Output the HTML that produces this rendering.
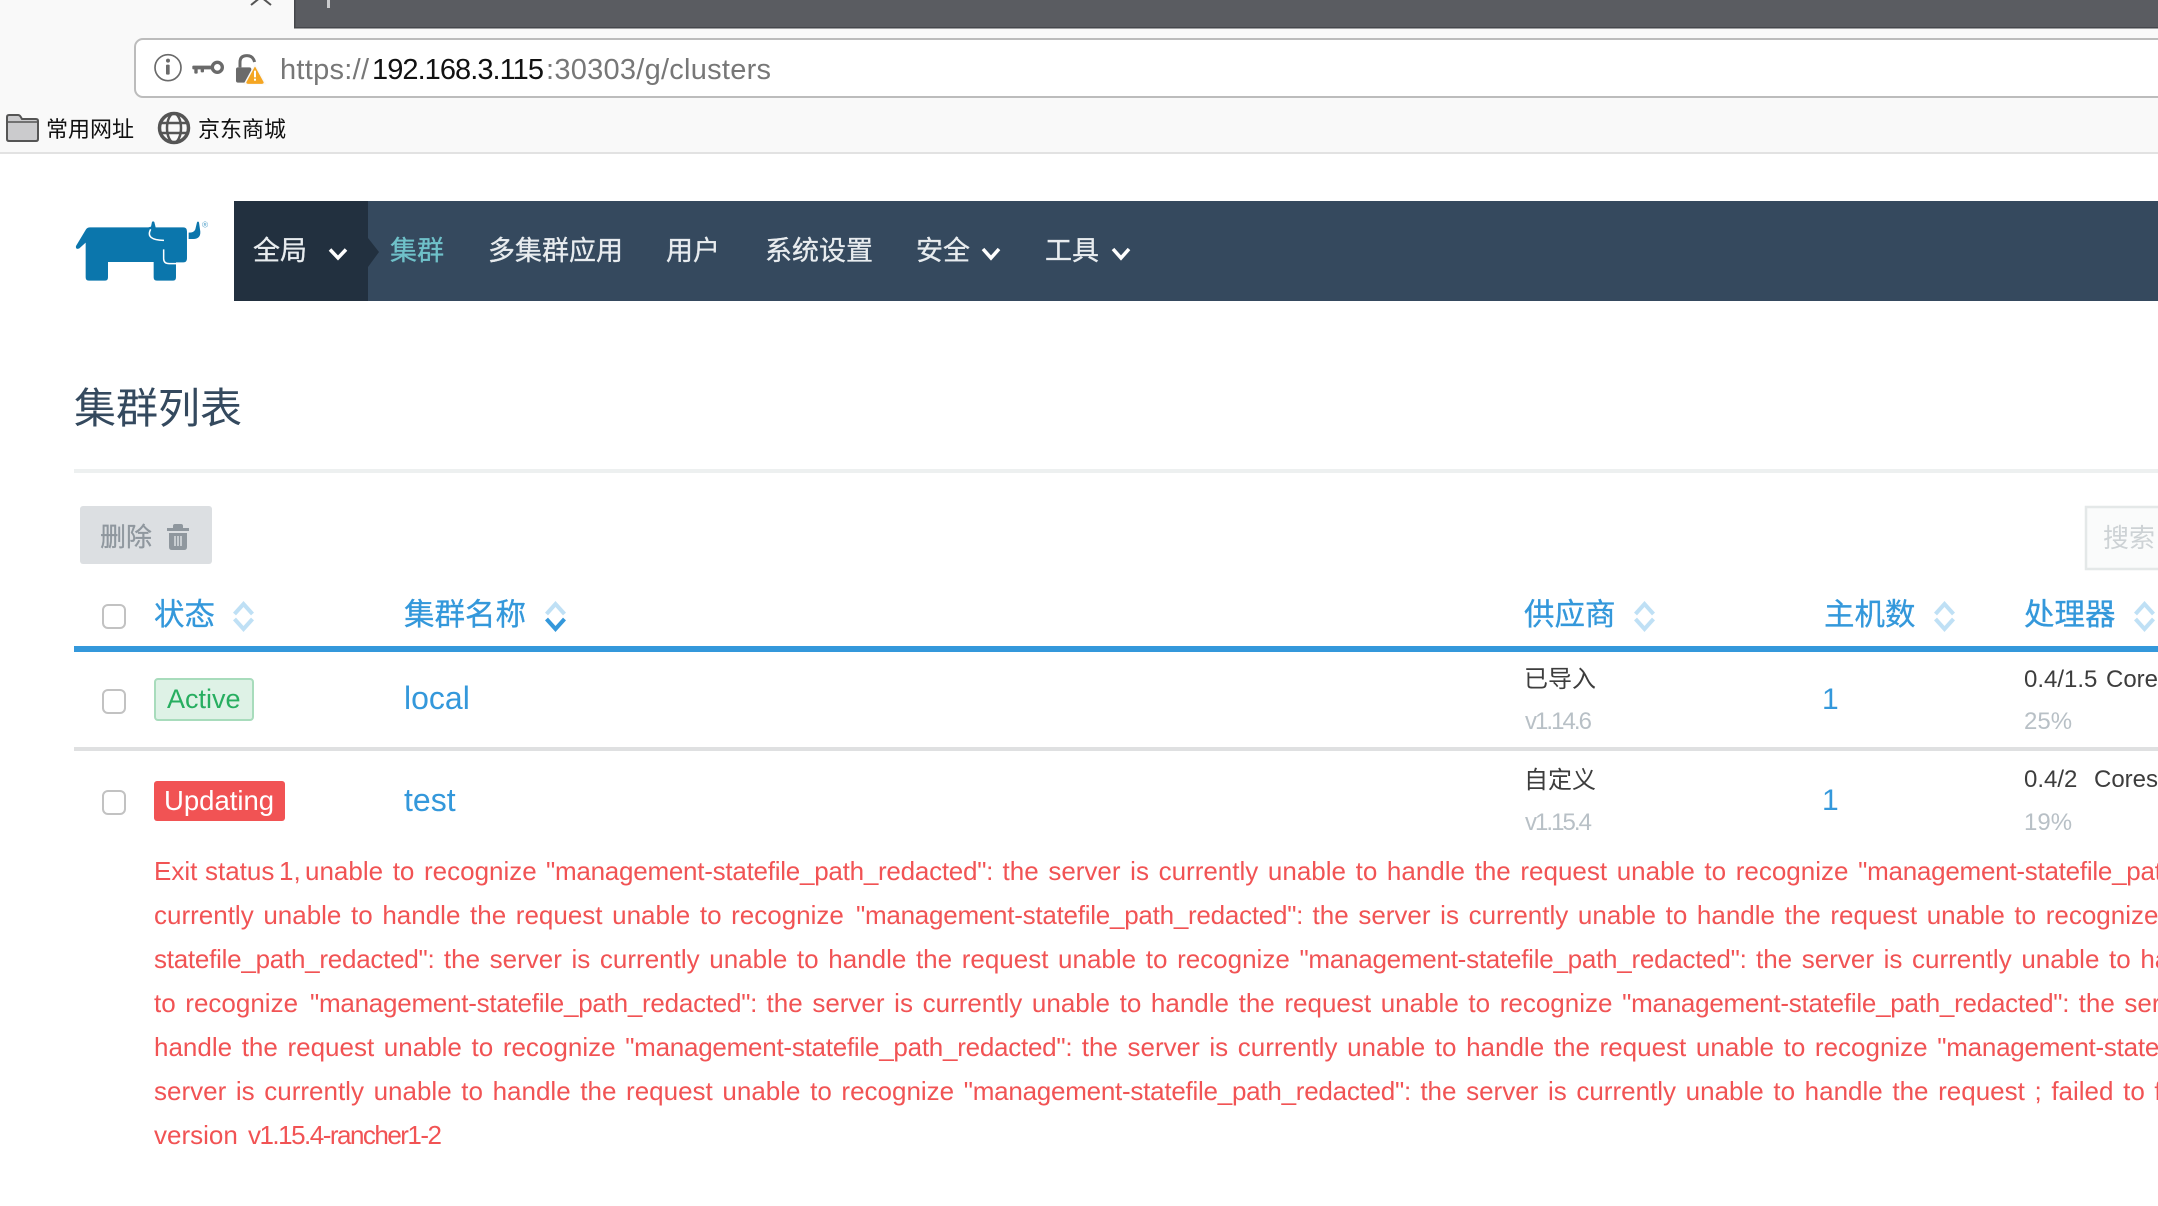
<!DOCTYPE html>
<html lang="zh">
<head>
<meta charset="utf-8">
<title>集群列表</title>
<style>
html,body{margin:0;padding:0;background:#fff;width:2158px;height:1206px;overflow:hidden}
svg{display:block}
text{font-family:"Liberation Sans","Noto Sans CJK SC",sans-serif;white-space:pre}
.nav{font-size:27px;fill:#e8ecef;stroke:#e8ecef;stroke-width:.3px}
.th{font-size:30.5px;fill:#3498db;stroke:#3498db;stroke-width:.3px}
.sub{font-size:24px;fill:#b8c0c6}
.cell{font-size:24px;fill:#3d3d3d}
.err{font-size:26px;fill:#f15354;word-spacing:2.4px}
.p{letter-spacing:-.25px}
.link{font-size:32px;fill:#3498db}
.cb{fill:#fff;stroke:#c2c2c2;stroke-width:2}
</style>
</head>
<body>
<svg width="2158" height="1206" viewBox="0 0 2158 1206" xmlns="http://www.w3.org/2000/svg">
<defs>
<g id="sortL" fill="none" stroke="#bfe0f5" stroke-width="4">
<path d="M1 13 L10 3 L19 13"/><path d="M1 18 L10 28 L19 18"/>
</g>
</defs>

<!-- browser chrome -->
<rect x="0" y="0" width="2158" height="153" fill="#f9f9f9"/>
<rect x="294" y="0" width="1864" height="28" fill="#5a5c61"/>
<rect x="294" y="27" width="1864" height="1.5" fill="#45474c"/>
<rect x="294" y="0" width="1.5" height="28" fill="#45474c"/>
<path d="M251 5 L261 -3 L271 5" fill="none" stroke="#555" stroke-width="2"/>
<rect x="327" y="0" width="3" height="8" fill="#c9cacc"/>
<rect x="0" y="152" width="2158" height="2" fill="#e2e2e2"/>
<rect x="135" y="39" width="2040" height="58" rx="8" fill="#fff" stroke="#bcbcbc" stroke-width="2"/>

<!-- address bar icons -->
<g transform="translate(130 30) scale(.3333)">
<circle cx="114" cy="113" r="39" fill="none" stroke="#6a6a6a" stroke-width="5"/>
<circle cx="114" cy="92" r="6" fill="#6a6a6a"/>
<rect x="108" y="104" width="11" height="30" rx="3" fill="#6a6a6a"/>
<circle cx="262" cy="112" r="15" fill="none" stroke="#6a6a6a" stroke-width="10"/>
<rect x="187" y="107" width="64" height="11" rx="3" fill="#6a6a6a"/>
<rect x="193" y="112" width="10" height="19" rx="3" fill="#6a6a6a"/>
<rect x="212" y="112" width="10" height="15" rx="3" fill="#6a6a6a"/>
<rect x="318" y="112" width="46" height="46" rx="6" fill="#6a6a6a"/>
<path d="M330 112 V97 Q330 77 351 77 Q369 77 374 96" fill="none" stroke="#6a6a6a" stroke-width="9"/>
<path d="M375 100 L410 164 H340 Z" fill="#f9f9f9"/>
<path d="M375 112 L399 156 Q401 160 396 160 H354 Q349 160 351 156 Z" fill="#f5a623" stroke="#f5a623" stroke-width="3" stroke-linejoin="round"/>
<rect x="372" y="122" width="6" height="20" fill="#fff"/>
<rect x="372" y="146" width="6" height="6" fill="#fff"/>
</g>

<text x="280" y="79" font-size="29" textLength="89" lengthAdjust="spacing" fill="#777">https://</text>
<text x="372" y="79" font-size="29" textLength="172" lengthAdjust="spacing" fill="#111">192.168.3.115</text>
<text x="546" y="79" font-size="29" textLength="225" lengthAdjust="spacing" fill="#777">:30303/g/clusters</text>

<!-- bookmarks -->
<path d="M7 120 V117 Q7 115 9 115 H18 Q19.500 115 20.500 116.500 L22 119 H36 Q38 119 38 121 V139 Q38 141 36 141 H9 Q7 141 7 139 Z" fill="#cbcbcd" stroke="#555" stroke-width="2"/>
<path d="M7 122 H38" stroke="#555" stroke-width="1.500"/>
<text x="46" y="137" font-size="22" fill="#111">常用网址</text>
<g fill="none" stroke="#555" transform="translate(174 128)">
<circle r="14.500" stroke-width="3.500"/>
<ellipse rx="7" ry="14.500" stroke-width="2.500"/>
<path d="M-14 -5 H14 M-14 5 H14" stroke-width="2.500"/>
</g>
<text x="198" y="137" font-size="22" fill="#111">京东商城</text>

<!-- logo -->
<g transform="translate(50 190) scale(.3333)">
<path d="M78 168 L108 118 Q112 112 120 112 H295 L303 110 L306 96 Q309 92 313 96 L317 112 H400 Q411 112 411 124 V205 Q411 217 400 217 H378 V262 Q378 272 368 272 H322 Q311 272 311 262 V216 H174 V262 Q174 272 164 272 H118 Q107 272 107 262 V158 L88 175 Q76 180 78 168 Z" fill="#0b76ac"/>
<path d="M302 118 Q285 150 342 151" fill="none" stroke="#fff" stroke-width="4.500"/>
<path d="M341 178 V206 Q341 221 358 221 H380" fill="none" stroke="#fff" stroke-width="4.500"/>
<path d="M416 128 Q432 128 436 118 L441 97 Q444 92 447 97 L451 125 Q452 147 430 147 H416 Z" fill="#0b76ac"/>
<text x="456" y="113" font-size="25" fill="#5ba5cc">®</text>
</g>

<!-- nav -->
<rect x="234" y="201" width="1924" height="100" fill="#35495e"/>
<rect x="234" y="201" width="134" height="100" fill="#22303f"/>
<path d="M368 238 L379 252 L368 267 Z" fill="#22303f"/>
<text class="nav" x="253" y="260">全局</text>
<path d="M330 249.500 L338 258 L346 249.500" fill="none" stroke="#fff" stroke-width="3.500"/>
<text class="nav" x="390" y="260" style="fill:#6fc1c9;stroke:#6fc1c9">集群</text>
<text class="nav" x="488" y="260">多集群应用</text>
<text class="nav" x="666" y="260">用户</text>
<text class="nav" x="765" y="260">系统设置</text>
<text class="nav" x="916" y="260">安全</text>
<path d="M983 249 L991 258 L999 249" fill="none" stroke="#fff" stroke-width="3.500"/>
<text class="nav" x="1045" y="260">工具</text>
<path d="M1113 249 L1121 258 L1129 249" fill="none" stroke="#fff" stroke-width="3.500"/>

<!-- heading -->
<text x="74" y="423" font-size="42" fill="#34495e">集群列表</text>
<rect x="74" y="469" width="2084" height="4" fill="#edf0f0"/>

<!-- toolbar -->
<rect x="80" y="506" width="132" height="58" rx="3" fill="#dcdfe2"/>
<text x="100" y="546" font-size="26" fill="#8f979e" stroke="#8f979e" stroke-width=".3">删除</text>
<g fill="#8f979e">
<path d="M175 524 h6 q2 0 2 2 v2 h6 v3 h-22 v-3 h6 v-2 q0-2 2-2z"/>
<path d="M169 533 h18 v14 q0 3 -3 3 h-12 q-3 0 -3 -3 z"/>
</g>
<path d="M175 536 V546 M178 536 V546 M181 536 V546" stroke="#dcdfe2" stroke-width="1.500"/>
<rect x="2086" y="507" width="80" height="62" fill="#fafbfb" stroke="#e4e8e8" stroke-width="2.500"/>
<text x="2103" y="547" font-size="26" fill="#cdd2d5">搜索</text>

<!-- table head -->
<rect class="cb" x="103" y="605" width="22" height="23" rx="5"/>
<text class="th" x="154" y="625">状态</text>
<use href="#sortL" x="233.500" y="601"/>
<text class="th" x="404" y="625">集群名称</text>
<g transform="translate(545.500 601)" fill="none" stroke-width="4">
<path d="M1 13 L10 3 L19 13" stroke="#bfe0f5"/><path d="M1 18 L10 28 L19 18" stroke="#3498db"/>
</g>
<text class="th" x="1524" y="625">供应商</text>
<use href="#sortL" x="1634.500" y="601"/>
<text class="th" x="1824" y="625">主机数</text>
<use href="#sortL" x="1934.500" y="601"/>
<text class="th" x="2024" y="625">处理器</text>
<use href="#sortL" x="2134.500" y="601"/>
<rect x="74" y="646" width="2084" height="6" fill="#3498db"/>

<!-- row 1 -->
<rect class="cb" x="103" y="690" width="22" height="23" rx="5"/>
<rect x="155" y="679" width="98" height="41" rx="3" fill="#def2e6" stroke="#a8dcbc" stroke-width="2"/>
<text x="167" y="708" font-size="27" fill="#27ae60">Active</text>
<text class="link" x="404" y="709">local</text>
<text class="cell" x="1524" y="687">已导入</text>
<text class="sub" x="1525" y="729" textLength="67" lengthAdjust="spacing">v1.14.6</text>
<text x="1822" y="709" font-size="30" fill="#3498db">1</text>
<text class="cell" x="2024" y="687">0.4/1.5 <tspan x="2106">Cores</tspan></text>
<text class="sub" x="2024" y="729">25%</text>
<rect x="74" y="747" width="2084" height="4" fill="#dfe0e1"/>

<!-- row 2 -->
<rect class="cb" x="103" y="791" width="22" height="23" rx="5"/>
<rect x="154" y="781" width="131" height="40" rx="3" fill="#f15354"/>
<text x="164" y="810" font-size="27.500" fill="#fff">Updating</text>
<text class="link" x="404" y="811">test</text>
<text class="cell" x="1524" y="788">自定义</text>
<text class="sub" x="1525" y="830" textLength="67" lengthAdjust="spacing">v1.15.4</text>
<text x="1822" y="810" font-size="30" fill="#3498db">1</text>
<text class="cell" x="2024" y="787">0.4/2 <tspan x="2094">Cores</tspan></text>
<text class="sub" x="2024" y="830">19%</text>

<!-- error message -->
<text class="err" x="154" y="880">Exit <tspan x="205">status </tspan><tspan x="279">1, </tspan><tspan x="305">unable to recognize </tspan><tspan class="p" x="546">"management-statefile_path_redacted": </tspan>the server is currently unable to handle the request unable to recognize <tspan class="p">"management-statefile_path_redacted"</tspan></text>
<text class="err" x="154" y="924">currently unable to handle the request unable to recognize <tspan class="p" x="856">"management-statefile_path_redacted": </tspan>the server is currently unable to handle the request unable to recognize <tspan class="p">"management-</tspan></text>
<text class="err" x="154" y="968"><tspan class="p">statefile_path_redacted": </tspan>the server is currently unable to handle the request unable to recognize <tspan class="p">"management-statefile_path_redacted": </tspan>the server is currently unable to handle</text>
<text class="err" x="154" y="1012">to recognize <tspan class="p" x="310">"management-statefile_path_redacted": </tspan>the server is currently unable to handle the request unable to recognize <tspan class="p">"management-statefile_path_redacted": </tspan>the server is</text>
<text class="err" x="154" y="1056">handle the request unable to recognize <tspan class="p">"management-statefile_path_redacted": </tspan>the server is currently unable to handle the request unable to recognize <tspan class="p">"management-statefile_path_redacted"</tspan></text>
<text class="err" x="154" y="1100">server is currently unable to handle the request unable to recognize <tspan class="p">"management-statefile_path_redacted": </tspan>the server is currently unable to handle the request ; failed to find</text>
<text class="err" x="154" y="1144">version</text>
<text class="err" x="248" y="1144" textLength="194" lengthAdjust="spacing">v1.15.4-rancher1-2</text>
</svg>
</body>
</html>
